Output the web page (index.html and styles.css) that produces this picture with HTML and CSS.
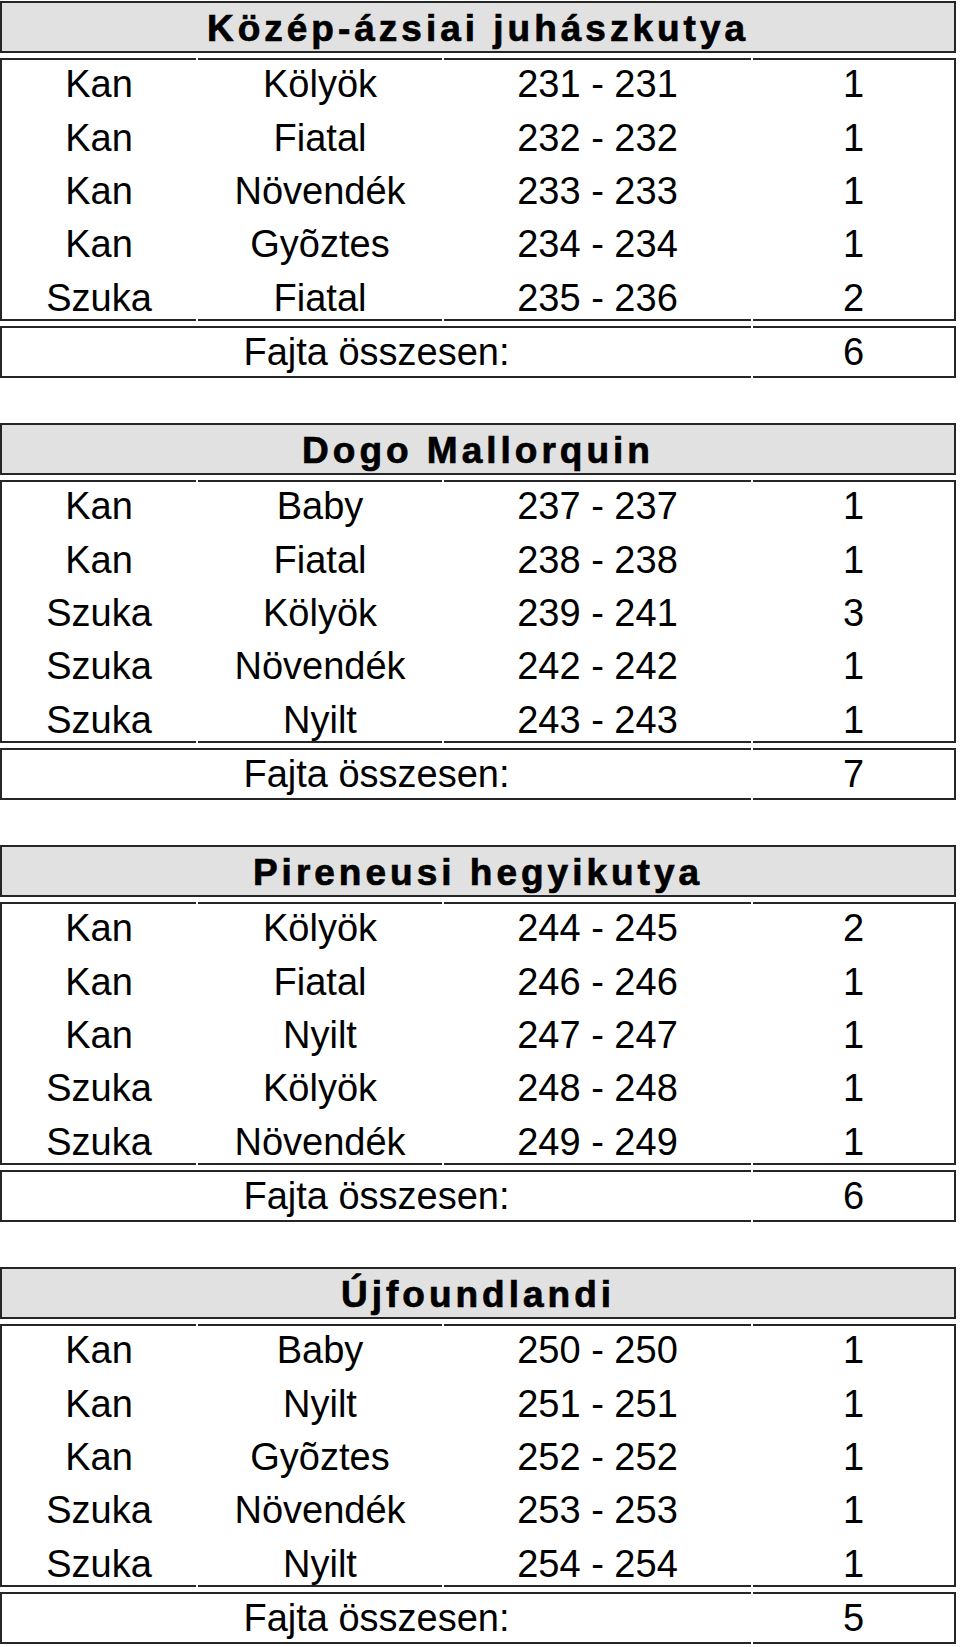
FILE: index.html
```html
<!DOCTYPE html>
<html lang="hu">
<head>
<meta charset="utf-8">
<title>Fajták</title>
<link rel="stylesheet" href="styles.css">
</head>
<body>
<div class="page">

  <section class="breed">
    <div class="breed-title">Közép-ázsiai juhászkutya</div>
    <div class="rows">
      <div class="row"><div>Kan</div><div>Kölyök</div><div>231 - 231</div><div>1</div></div>
      <div class="row"><div>Kan</div><div>Fiatal</div><div>232 - 232</div><div>1</div></div>
      <div class="row"><div>Kan</div><div>Növendék</div><div>233 - 233</div><div>1</div></div>
      <div class="row"><div>Kan</div><div>Gyõztes</div><div>234 - 234</div><div>1</div></div>
      <div class="row"><div>Szuka</div><div>Fiatal</div><div>235 - 236</div><div>2</div></div>
    </div>
    <div class="total"><div>Fajta összesen:</div><div>6</div></div>
  </section>

  <section class="breed">
    <div class="breed-title">Dogo Mallorquin</div>
    <div class="rows">
      <div class="row"><div>Kan</div><div>Baby</div><div>237 - 237</div><div>1</div></div>
      <div class="row"><div>Kan</div><div>Fiatal</div><div>238 - 238</div><div>1</div></div>
      <div class="row"><div>Szuka</div><div>Kölyök</div><div>239 - 241</div><div>3</div></div>
      <div class="row"><div>Szuka</div><div>Növendék</div><div>242 - 242</div><div>1</div></div>
      <div class="row"><div>Szuka</div><div>Nyilt</div><div>243 - 243</div><div>1</div></div>
    </div>
    <div class="total"><div>Fajta összesen:</div><div>7</div></div>
  </section>

  <section class="breed">
    <div class="breed-title">Pireneusi hegyikutya</div>
    <div class="rows">
      <div class="row"><div>Kan</div><div>Kölyök</div><div>244 - 245</div><div>2</div></div>
      <div class="row"><div>Kan</div><div>Fiatal</div><div>246 - 246</div><div>1</div></div>
      <div class="row"><div>Kan</div><div>Nyilt</div><div>247 - 247</div><div>1</div></div>
      <div class="row"><div>Szuka</div><div>Kölyök</div><div>248 - 248</div><div>1</div></div>
      <div class="row"><div>Szuka</div><div>Növendék</div><div>249 - 249</div><div>1</div></div>
    </div>
    <div class="total"><div>Fajta összesen:</div><div>6</div></div>
  </section>

  <section class="breed">
    <div class="breed-title">Újfoundlandi</div>
    <div class="rows">
      <div class="row"><div>Kan</div><div>Baby</div><div>250 - 250</div><div>1</div></div>
      <div class="row"><div>Kan</div><div>Nyilt</div><div>251 - 251</div><div>1</div></div>
      <div class="row"><div>Kan</div><div>Gyõztes</div><div>252 - 252</div><div>1</div></div>
      <div class="row"><div>Szuka</div><div>Növendék</div><div>253 - 253</div><div>1</div></div>
      <div class="row"><div>Szuka</div><div>Nyilt</div><div>254 - 254</div><div>1</div></div>
    </div>
    <div class="total"><div>Fajta összesen:</div><div>5</div></div>
  </section>

</div>
</body>
</html>
```

FILE: styles.css
```css
html, body {
  margin: 0;
  padding: 0;
  background: #ffffff;
}

body {
  font-family: "Liberation Sans", Arial, sans-serif;
  color: #000000;
}

.page {
  width: 956px;
  padding-top: 1px;
  display: flex;
  flex-direction: column;
  gap: 45px;
}

.breed {
  display: flex;
  flex-direction: column;
  gap: 5px;
}

.breed-title {
  background: #e1e1e1;
  border: 2px solid #262626;
  height: 45px;
  padding-top: 3px;
  box-sizing: content-box;
  text-align: center;
  font-weight: bold;
  font-size: 37px;
  letter-spacing: 4px;
  line-height: 45px;
  -webkit-text-stroke: 0.7px #000;
  overflow: hidden;
}

.row {
  display: grid;
  grid-template-columns: 196px 244px 307px 203px;
  column-gap: 2px;
}

.row > div,
.total > div {
  text-align: center;
  font-size: 38px;
  white-space: nowrap;
}

.row > div {
  line-height: 49px;
  padding-top: 4px;
}

.row > div:first-child {
  border-left: 2px solid #262626;
}

.row > div:last-child {
  border-right: 2px solid #262626;
}

.row:first-child > div {
  border-top: 2px solid #262626;
  padding-top: 2px;
  line-height: 45px;
  padding-bottom: 3px;
}

.row:last-child > div {
  border-bottom: 2px solid #262626;
  padding-top: 8px;
  line-height: 42px;
}

.total {
  display: grid;
  grid-template-columns: 751px 203px;
  column-gap: 2px;
}

.total > div {
  border-top: 2px solid #262626;
  border-bottom: 2px solid #262626;
  line-height: 47px;
  padding-top: 1px;
}

.total > div:first-child {
  border-left: 2px solid #262626;
}

.total > div:last-child {
  border-right: 2px solid #262626;
}
```
